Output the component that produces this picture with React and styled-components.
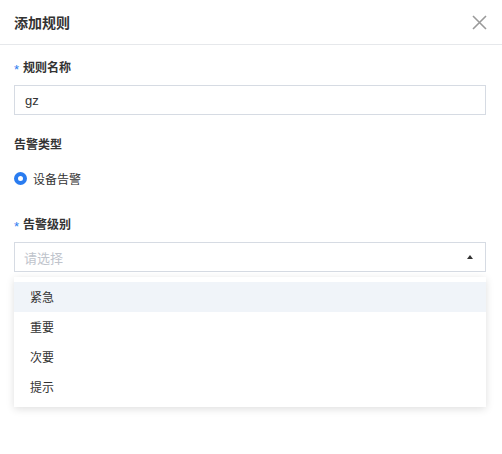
import React from 'react';
import styled, { createGlobalStyle } from 'styled-components';

const GlobalStyle = createGlobalStyle`
  body {
    margin: 0;
    background: #fff;
    font-family: "Noto Sans CJK SC", "Noto Sans", sans-serif;
    color: #333;
  }
`;

const Panel = styled.div`
  width: 502px;
  height: 454px;
  background: #fff;
`;

const Header = styled.div`
  height: 44px;
  padding: 0 15px 0 14px;
  display: flex;
  align-items: center;
  justify-content: space-between;
  border-bottom: 1px solid #e6e8eb;
`;

const Title = styled.div`
  font-size: 14px;
  font-weight: 600;
  color: #333;
`;

const Close = styled.button`
  border: 0;
  background: none;
  padding: 0;
  width: 15px;
  height: 15px;
  display: flex;
  cursor: pointer;
`;

const Body = styled.div`
  padding: 12px 16px 0 14px;
`;

const Field = styled.div`
  display: flex;
  flex-direction: column;
  gap: ${p => p.gap}px;
  margin-bottom: ${p => p.mb || 0}px;
`;

const Label = styled.div`
  height: 20px;
  line-height: 20px;
  font-size: 12px;
  font-weight: 600;
  color: #333;
  display: flex;
  align-items: center;
`;

const Star = styled.span`
  color: #2a7cf0;
  font-family: "Liberation Sans", sans-serif;
  font-size: 13px;
  font-weight: 400;
  line-height: 20px;
  padding-top: 6px;
  margin-right: 4px;
`;

const Input = styled.div`
  height: 30px;
  box-sizing: border-box;
  border: 1px solid #d6dbe3;
  padding: 0 10px 0 ${p => (p.placeholder ? 9 : 10)}px;
  display: flex;
  align-items: center;
  justify-content: space-between;
  font-size: 13px;
  color: ${p => (p.placeholder ? '#c0c4cc' : '#333')};
  font-family: ${p => (p.placeholder ? '"Noto Sans CJK SC", sans-serif' : '"Liberation Sans", "Noto Sans CJK SC", sans-serif')};
`;

const SelectWrap = styled.div`
  position: relative;
`;

const Caret = styled.span`
  width: 0;
  height: 0;
  border-left: 3px solid transparent;
  border-right: 3px solid transparent;
  border-bottom: 4px solid #333;
  margin-right: 2px;
`;

const Radio = styled.label`
  height: 20px;
  display: flex;
  align-items: center;
  gap: 6px;
  font-size: 12px;
  color: #333;
`;

const Dot = styled.span`
  width: 13px;
  height: 13px;
  box-sizing: border-box;
  border-radius: 50%;
  border: 4px solid #2a7cf0;
  background: #fff;
`;

const Menu = styled.ul`
  position: absolute;
  top: calc(100% + 5px);
  left: 0;
  right: 0;
  margin: 0;
  padding: 5px 0;
  list-style: none;
  background: #fff;
  box-shadow: 0 2px 8px rgba(0, 0, 0, 0.13);
`;

const Item = styled.li`
  height: 30px;
  line-height: 30px;
  padding-left: 16px;
  font-size: 12px;
  color: #333;
  background: ${p => (p.active ? '#f0f4f9' : '#fff')};
`;

const levels = ['紧急', '重要', '次要', '提示'];

export default function App() {
  return (
    <Panel>
      <GlobalStyle />
      <Header>
        <Title>添加规则</Title>
        <Close aria-label="关闭">
          <svg width="15" height="15" viewBox="0 0 15 15">
            <path d="M1 1 L14 14 M14 1 L1 14" stroke="#9a9a9a" strokeWidth="1.6" fill="none" />
          </svg>
        </Close>
      </Header>
      <Body>
        <Field gap={8} mb={19}>
          <Label><Star>*</Star>规则名称</Label>
          <Input>gz</Input>
        </Field>
        <Field gap={14} mb={26}>
          <Label>告警类型</Label>
          <Radio><Dot />设备告警</Radio>
        </Field>
        <Field gap={8}>
          <Label><Star>*</Star>告警级别</Label>
          <SelectWrap>
            <Input placeholder="1">请选择<Caret /></Input>
            <Menu>
              {levels.map((l, i) => (
                <Item key={l} active={i === 0}>{l}</Item>
              ))}
            </Menu>
          </SelectWrap>
        </Field>
      </Body>
    </Panel>
  );
}
